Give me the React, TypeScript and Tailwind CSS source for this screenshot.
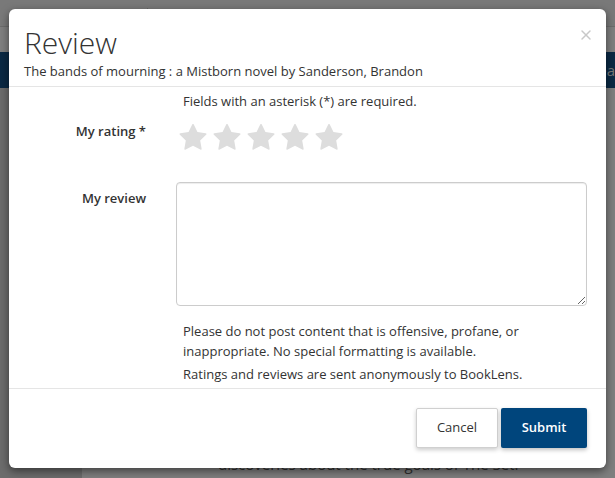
import { X } from "lucide-react";

function Star() {
  return (
    <svg viewBox="0 0 1664 1600" className="h-[26px] w-[28px]" fill="#dddddd">
      <path d="M1664 610q0 22-26 48l-363 354 86 500q1 7 1 20 0 21-10.5 35.5T1321 1582q-19 0-40-12l-449-236-449 236q-22 12-40 12-21 0-31.5-14.5T301 1532q0-6 2-20l86-500L25 658Q0 631 0 610q0-37 56-46l502-73L783 36q19-41 49-41t49 41l225 455 502 73q56 9 56 46z" />
    </svg>
  );
}

export default function App() {
  return (
    <div
      className="relative h-[478px] w-[615px] overflow-hidden bg-[#7f7f7f] text-[13px] text-[#333]"
      style={{ fontFamily: '"Open Sans", "Noto Sans", sans-serif' }}
    >
      {/* page underneath the backdrop */}
      <div className="flex h-[27px] items-end border-b border-[#6c6c6c] bg-[#797979] pl-[130px]">
        <span className="text-[9px] text-[#333]">▼</span>
        <span className="ml-[8px] border-l border-[#666] pl-[6px] text-[15px] leading-[18px] text-[#2a2a2a]">
          bands of mourning
        </span>
      </div>
      <div className="h-[25px]" />
      <div className="flex h-[36px] justify-end bg-[#0b2944] text-[15px] leading-[36px] text-[#777]">
        <span>Sea</span>
      </div>
      <div className="flex h-[391px]">
        <div className="w-[82px] bg-[#6c6c6c]" />
        <div className="flex flex-1 flex-col">
          <div className="flex-1" />
          <div className="pl-[136px] pb-[4px] text-[15px] text-[#2f2f2f]">
            discoveries about the true goals of The Set.
          </div>
        </div>
      </div>

      {/* modal */}
      <div className="absolute left-[9px] top-[9px] flex h-[459px] w-[597px] flex-col rounded-[6px] bg-white shadow-[0_3px_9px_rgba(0,0,0,0.5)]">
        <div className="relative border-b border-[#e5e5e5] px-[15px] pb-[6px] pt-[16px]">
          <button className="absolute right-[12px] top-[18px] text-[#c8c8c8]">
            <X size={16} strokeWidth={2.2} />
          </button>
          <h1 className="text-[30px] font-light leading-[36px] text-[#333]">Review</h1>
          <div className="mt-[1px] leading-[18px]">
            The bands of mourning : a Mistborn novel by Sanderson, Brandon
          </div>
        </div>

        <div className="flex-1 border-b border-[#e5e5e5]">
          <div className="ml-[174px] mt-[5px] leading-[18px]">
            Fields with an asterisk (*) are required.
          </div>
          <div className="mt-[8px] flex">
            <div className="w-[137px] pt-[4px] text-right font-semibold leading-[18px]">My rating *</div>
            <div className="ml-[33px] mt-[6px] flex gap-[6px]">
              <Star />
              <Star />
              <Star />
              <Star />
              <Star />
            </div>
          </div>
          <div className="mt-[32px] flex">
            <div className="w-[137px] pt-[7px] text-right font-semibold leading-[18px]">My review</div>
            <div className="ml-[30px] w-[411px]">
              <textarea className="block h-[124px] w-full rounded-[4px] border border-[#cccccc] shadow-[inset_0_1px_1px_rgba(0,0,0,0.075)]" />
              <div className="mt-[15px] px-[7px] leading-[20px]">
                Please do not post content that is offensive, profane, or inappropriate. No special
                formatting is available.
              </div>
              <div className="mt-[3px] px-[7px] leading-[20px]">
                Ratings and reviews are sent anonymously to BookLens.
              </div>
            </div>
          </div>
        </div>

        <div className="flex h-[79px] items-start justify-end gap-[3px] pr-[19px] pt-[19px]">
          <button className="h-[40px] w-[82px] rounded-[2px] border border-[#d0d0d0] bg-white text-[#333] shadow-[0_2px_4px_rgba(0,0,0,0.2)]">
            Cancel
          </button>
          <button className="h-[40px] w-[86px] rounded-[2px] bg-[#00457c] font-semibold text-white shadow-[0_2px_4px_rgba(0,0,0,0.25)]">
            Submit
          </button>
        </div>
      </div>
    </div>
  );
}
